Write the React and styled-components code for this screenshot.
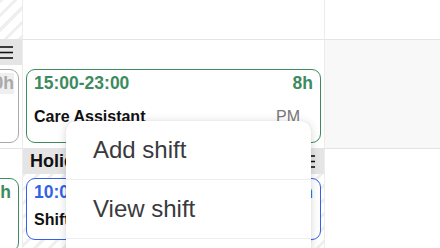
import React from 'react';
import styled, { createGlobalStyle, css } from 'styled-components';

const Global = createGlobalStyle`
  html, body {
    margin: 0;
    padding: 0;
    background: #ffffff;
    overflow: hidden;
  }
  body {
    font-family: 'Liberation Sans', Arial, sans-serif;
  }
`;

const GREEN = '#3d8b5f';
const BLUE = '#3462e6';

const hatch = css`
  background: repeating-linear-gradient(135deg, #ffffff 0 7px, #efefef 7px 10px);
`;

const Page = styled.div`
  position: relative;
  width: 440px;
  height: 248px;
  overflow: hidden;
`;

const Grid = styled.div`
  display: grid;
  grid-template-columns: repeat(3, 302px);
  grid-template-rows: 40px 109px 120px;
  margin-left: -279px;
`;

const Cell = styled.div`
  box-sizing: border-box;
  border-right: 1px solid #ececec;
  border-bottom: 1px solid #e4e4e4;
  background: ${p => (p.$shaded ? '#f8f8f8' : '#ffffff')};
  ${p => p.$hatched && hatch}
  display: flex;
  flex-direction: column;
`;

const DayHeader = styled.div`
  height: 25px;
  flex: none;
  display: flex;
  align-items: center;
  justify-content: space-between;
  padding: 0 9px 0 7px;
  background: ${p => (p.$filled ? '#e5e5e5' : 'transparent')};
`;

const HeaderLabel = styled.span`
  font-size: 18px;
  font-weight: 700;
  color: #111111;
`;

const Shifts = styled.div`
  display: flex;
  flex-direction: column;
  gap: 6px;
  padding: 4px 3px 0;
`;

const Card = styled.div`
  box-sizing: border-box;
  height: ${p => p.$height}px;
  flex: none;
  background: #ffffff;
  border: 1px solid ${p => p.$color};
  border-radius: 9px;
  padding: 3px 7px 0 7px;
  display: flex;
  flex-direction: column;
  gap: ${p => p.$gap}px;
`;

const CardRow = styled.div`
  display: flex;
  justify-content: space-between;
  align-items: baseline;
  white-space: nowrap;
`;

const Time = styled.span`
  font-size: 17.5px;
  line-height: 21px;
  font-weight: 700;
  color: ${p => p.$color};
`;

const Hours = styled.span`
  font-size: 17.5px;
  line-height: 21px;
  font-weight: 700;
  color: ${p => p.$color};
  background: ${p => (p.$muted ? '#efefef' : 'transparent')};
  margin-right: ${p => (p.$muted ? '-3px' : '0')};
`;

const Role = styled.span`
  font-size: 16px;
  line-height: 19px;
  font-weight: 700;
  color: #111111;
`;

const Period = styled.span`
  font-size: 16px;
  line-height: 19px;
  color: #777777;
  margin-right: 13px;
`;

const Menu = styled.div`
  position: absolute;
  left: 66px;
  top: 121px;
  width: 245px;
  background: #ffffff;
  border-radius: 10px;
  box-shadow: 0 1px 10px rgba(0, 0, 0, 0.16), 0 0 1px rgba(0, 0, 0, 0.12);
  overflow: hidden;
`;

const MenuItem = styled.div`
  height: 58px;
  display: flex;
  align-items: center;
  padding-left: 27px;
  border-bottom: 1px solid #eeeeee;
  font-size: 24px;
  color: #3a3a3e;
`;

const MenuIcon = () => (
  <svg width="14" height="13" viewBox="0 0 14 13" fill="none" stroke="#111" strokeWidth="1.6">
    <line x1="0" y1="1" x2="14" y2="1" />
    <line x1="0" y1="6.5" x2="14" y2="6.5" />
    <line x1="0" y1="12" x2="14" y2="12" />
  </svg>
);

function ShiftCard({ color, time, hours, role, period, height, gap, muted }) {
  return (
    <Card $color={color} $height={height} $gap={gap}>
      <CardRow>
        <Time $color={color}>{time}</Time>
        <Hours $color={color} $muted={muted}>{hours}</Hours>
      </CardRow>
      <CardRow>
        <Role>{role}</Role>
        {period && <Period>{period}</Period>}
      </CardRow>
    </Card>
  );
}

export default function App() {
  return (
    <Page>
      <Global />
      <Grid>
        <Cell $hatched />
        <Cell />
        <Cell />

        <Cell>
          <DayHeader $filled>
            <HeaderLabel>Bank Holiday</HeaderLabel>
            <MenuIcon />
          </DayHeader>
          <Shifts>
            <ShiftCard color="#a9a9a9" time="" hours="10h" role="" height={74} gap={13} muted />
          </Shifts>
        </Cell>
        <Cell>
          <DayHeader />
          <Shifts>
            <ShiftCard color={GREEN} time="15:00-23:00" hours="8h" role="Care Assistant" period="PM" height={74} gap={13} />
          </Shifts>
        </Cell>
        <Cell $shaded />

        <Cell>
          <DayHeader />
          <Shifts>
            <ShiftCard color={GREEN} time="07:00-15:00" hours="8h" role="Care Assistant" height={74} gap={7} />
          </Shifts>
        </Cell>
        <Cell $hatched>
          <DayHeader $filled>
            <HeaderLabel>Holiday</HeaderLabel>
            <MenuIcon />
          </DayHeader>
          <Shifts>
            <ShiftCard color={BLUE} time="10:00-18:00" hours="8h" role="Shift Leader" height={62} gap={7} />
          </Shifts>
        </Cell>
        <Cell />
      </Grid>

      <Menu>
        <MenuItem>Add shift</MenuItem>
        <MenuItem>View shift</MenuItem>
        <MenuItem>Edit shift</MenuItem>
      </Menu>
    </Page>
  );
}
